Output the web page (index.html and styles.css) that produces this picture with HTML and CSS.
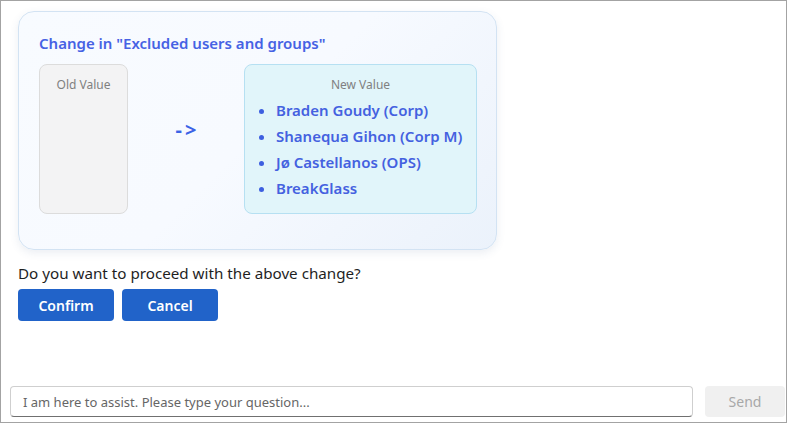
FILE: index.html
```html
<!DOCTYPE html>
<html>
<head>
<meta charset="utf-8">
<link rel="stylesheet" href="styles.css">
</head>
<body>
<div class="frame">
  <div class="content">
    <div class="card">
      <div class="card-title">Change in "Excluded users and groups"</div>
      <div class="compare">
        <div class="old-box">
          <div class="box-label">Old Value</div>
        </div>
        <div class="arrow">-&gt;</div>
        <div class="new-box">
          <div class="box-label">New Value</div>
          <ul class="value-list">
            <li>Braden Goudy (Corp)</li>
            <li>Shanequa Gihon (Corp M)</li>
            <li>Jø Castellanos (OPS)</li>
            <li>BreakGlass</li>
          </ul>
        </div>
      </div>
    </div>
    <p class="question">Do you want to proceed with the above change?</p>
    <div class="actions">
      <button class="btn">Confirm</button>
      <button class="btn">Cancel</button>
    </div>
  </div>
  <div class="input-bar">
    <input class="chat-input" type="text" placeholder="I am here to assist. Please type your question...">
    <button class="send-btn">Send</button>
  </div>
</div>
</body>
</html>
```
FILE: styles.css
```css
* { box-sizing: border-box; }
html, body { margin: 0; padding: 0; }
body {
  font-family: "Noto Sans", "Open Sans", sans-serif;
  color: #222;
  background: #fff;
}
.frame {
  width: 787px;
  height: 423px;
  border: 1px solid #a3a3a3;
  display: flex;
  flex-direction: column;
}
.content {
  flex: 1;
  padding: 10px 0 0 17px;
}
.card {
  width: 479px;
  height: 239px;
  border: 1px solid #d3e3f3;
  border-radius: 16px;
  background: linear-gradient(135deg, #f8fbff 0%, #f7faff 50%, #ebf2fb 100%);
  box-shadow: 0 3px 8px rgba(60, 90, 140, 0.10);
  padding: 21px 19px 35px 20px;
  display: flex;
  flex-direction: column;
}
.card-title {
  font-size: 15px;
  font-weight: 600;
  color: #4662e4;
  line-height: 20px;
}
.compare {
  margin-top: 11px;
  display: flex;
  align-items: stretch;
  flex: 1;
}
.old-box {
  width: 89px;
  background: #f3f3f4;
  border: 1px solid #dcdcdc;
  border-radius: 8px;
  padding-top: 11px;
  text-align: center;
}
.box-label {
  font-size: 12px;
  color: #808080;
  line-height: 18px;
  text-align: center;
}
.arrow {
  flex: 1;
  display: flex;
  align-items: center;
  justify-content: center;
  font-size: 20px;
  font-weight: 700;
  color: #3b63e6;
  letter-spacing: 3px;
  padding-bottom: 20px;
  padding-left: 3px;
}
.new-box {
  width: 233px;
  background: #e1f5fa;
  border: 1px solid #b6e0f2;
  border-radius: 8px;
  padding-top: 11px;
}
.value-list {
  margin: 3px 0 0 0;
  padding: 0 0 0 31px;
  list-style: disc;
}
.value-list li {
  font-size: 15px;
  font-weight: 600;
  color: #4461e0;
  line-height: 26px;
}
.value-list li::marker { color: #3d5fe0; }
.question {
  margin: 12px 0 0 0;
  font-size: 15.2px;
  line-height: 22px;
  color: #1f1f1f;
}
.actions {
  margin-top: 5px;
  display: flex;
  gap: 8px;
}
.btn {
  width: 96px;
  height: 32px;
  border: none;
  border-radius: 4px;
  background: #2163c9;
  color: #fff;
  font-family: inherit;
  font-size: 14px;
  font-weight: 600;
}
.input-bar {
  display: flex;
  gap: 12px;
  padding: 0 0 5px 9px;
}
.chat-input {
  width: 683px;
  height: 31px;
  border: 1px solid #cfcfcf;
  border-bottom: 1px solid #707070;
  border-radius: 4px;
  padding: 0 12px;
  font-family: inherit;
  font-size: 13px;
  color: #333;
  outline: none;
}
.chat-input::placeholder { color: #666; }
.send-btn {
  width: 80px;
  height: 31px;
  border: none;
  border-radius: 4px;
  background: #f0f0f0;
  color: #a8a8a8;
  font-family: inherit;
  font-size: 14px;
}
```
